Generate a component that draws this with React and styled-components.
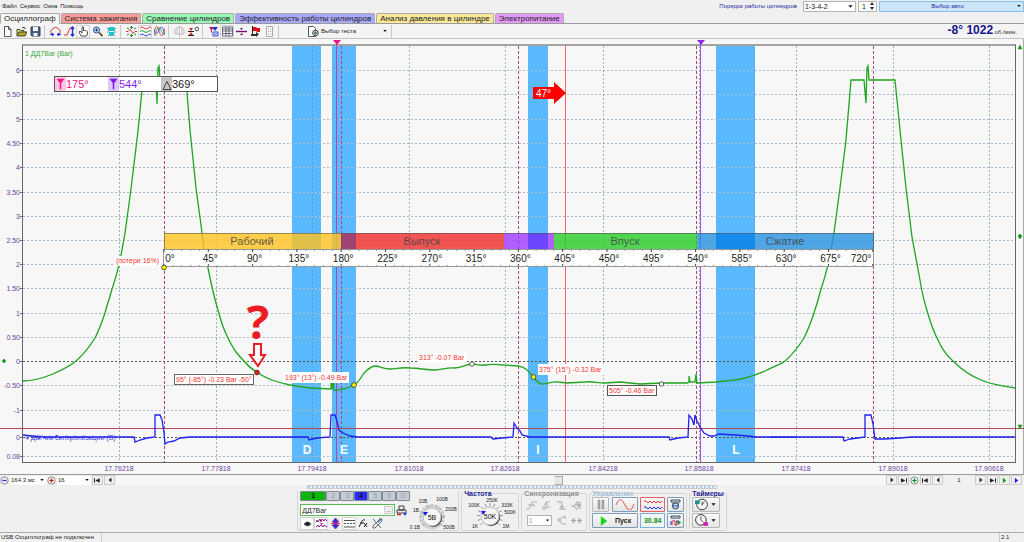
import React, { useState } from "react";
import styled, { createGlobalStyle } from "styled-components";

const MENU = ["Файл", "Сервис", "Окна", "Помощь"];

const TABS = [
  { title: "Осциллограф", color: "#f6f6f6" },
  { title: "Система зажигания", color: "#fb9c98" },
  { title: "Сравнение цилиндров", color: "#98f8b4" },
  { title: "Эффективность работы цилиндров", color: "#a9a8fb" },
  { title: "Анализ давления в цилиндре", color: "#fbe898" },
  { title: "Электропитание", color: "#e29bf8" },
];

const Y_MARKS = [
  [70, "6"], [94, "5.50"], [119, "5"], [143, "4.50"], [167, "4"], [192, "3.50"],
  [216, "3"], [240, "2.50"], [264, "2"], [288, "1.50"], [313, "1"], [337, "0.50"],
  [361, "0"], [385, "-0.50"], [410, "-1"], [437, "0"], [456, "0.08"],
];

const X_MARKS = [
  [119, "17.76218"], [216, "17.77818"], [312, "17.79418"], [409, "17.81018"],
  [505, "17.82618"], [603, "17.84218"], [699, "17.85818"], [796, "17.87418"],
  [893, "17.89018"], [989, "17.90618"],
];

const BANDS = [
  { x: 292, w: 29, label: "D", lx: 307 },
  { x: 332, w: 24, label: "E", lx: 344 },
  { x: 528, w: 20, label: "I", lx: 538 },
  { x: 716, w: 39, label: "L", lx: 736 },
];

const PHASES = [
  { x: 164, w: 177, color: "#ffc21e", label: "Рабочий", lx: 252 },
  { x: 341, w: 163, color: "#f02a2a", label: "Выпуск", lx: 422 },
  { x: 504, w: 50, color: "#9f38ff" },
  { x: 554, w: 143, color: "#26cc26", label: "Впуск", lx: 625 },
  { x: 697, w: 177, color: "#2690e0", label: "Сжатие", lx: 785 },
];

const TDC = [164, 341, 518, 696, 873];

const PRESSURE =
  "M23 381C33 381 43 378 53 374C62 370 70 366 76 361C84 354 90 346 95 338C99 330 102 322 105 313" +
  "C107 305 110 297 112 289C115 281 117 272 119 265C121 256 123 244 125 233L131 189L138 131L143 80H156L157 104L158 68L159 66L160 80" +
  "H186L190 130L196 188L201 225L204 249L208 268C210 278 214 297 218 310C221 322 224 330 228 338" +
  "C231 344 233 348 236 352C239 356 241 358 244 361C248 366 253 370 257 372C262 376 267 378 272 380" +
  "C280 383 285 384 290 385L310 388L331 389V379L332 389L333 378L334 390C341 391 348 388 354 385" +
  "C358 383 361 378 364 373C368 369 371 366 375 366C380 366 383 369 390 369C397 369 400 367 410 368" +
  "C420 368 425 370 435 370C442 370 447 367 455 368C462 368 466 364 472 364C477 364 480 366 485 365" +
  "S495 364 503 365L518 366C526 367 529 372 533 377C537 382 539 384 542 384C548 384 552 381 558 382" +
  "L567 383L585 382C592 381 597 383 605 383L620 382L640 384L661 383L687 383L689 382L689 376L690 382L695 382L696 374L697 383" +
  "L716 382L735 380C750 378 758 374 765 371C774 366 780 365 785 361C793 354 799 346 804 338" +
  "C808 330 811 322 814 313C817 304 819 297 821 289C824 281 826 272 828 265C830 256 832 244 834 233L840 188L846 140L851 80" +
  "H864L866 103L867 68L868 66L869 80H895L901 140L906 188L912 237L920 280C923 300 931 326 937 338" +
  "C941 347 947 356 953 361C962 370 971 376 981 380C992 385 1005 386 1015 388";

const SYNC =
  "M23 435L32 436L48 437H134L135 442L140 440L147 438L155 437V415H160L162 420L164 432L165 444L168 442L174 441" +
  "L180 438L190 437H308L309 440L317 438L330 437L331 415H335L337 421L339 430L343 433L350 436L358 437H491L493 439" +
  "L502 438L513 437L514 423L517 428L520 431L522 435L530 437H669L670 440L678 438L688 437L689 415L692 419L694 425" +
  "L695 415L697 421L700 427L704 433L710 436L714 436L719 434L735 435L748 436L756 437H843L844 441L850 439L858 438L865 437" +
  "V415H871L873 424L875 439H884L900 438L912 437H1015";

const NOISE = "M30 436l3 2 3-2 3 3 3-3 4 2 4-2 3 2 4-3 3 3 4-1 3-1 4 2 4-2 4 2 5-2 5 2 5-2M770 438l2-2 2 2 2-2 2 2 2-2 2 2 2-2 2 2 2-2 2 2 2-2 2 2 2-2";

function Chart() {
  return (
    <ChartSvg viewBox="0 39 1024 435" role="img" aria-label="Осциллограмма">
      <rect x="0" y="39" width="1024" height="435" fill="#f7f7f7" />
      {BANDS.map((b) => (
        <rect key={b.label} x={b.x} y="45" width={b.w} height="417" fill="#5ab8ff" />
      ))}
      <g shapeRendering="crispEdges" fill="none">
        {Y_MARKS.map(([y]) => (
          <React.Fragment key={y}>
            <path d={`M23 ${y}.5H1015`} stroke={y === 361 || y === 437 ? "#555" : "#a9bcc8"} strokeDasharray="2 2" />
            <path d={`M20 ${y}.5H23`} stroke="#666" />
          </React.Fragment>
        ))}
        {X_MARKS.map(([x]) => (
          <path key={x} d={`M${x}.5 46V462`} stroke="#6f8ea0" strokeOpacity="0.65" strokeDasharray="2 2" />
        ))}
        {TDC.map((x) => (
          <path key={x} d={`M${x}.5 46V462`} stroke="#b0447c" strokeDasharray="3 2" />
        ))}
        <path d="M22 45H1016" stroke="#a2a2a2" strokeWidth="2" />
        <path d="M22.5 45V462.5H1015.5V45" stroke="#666" />
        <path d="M1023.5 39V474" stroke="#aaa" />
        <path d="M565.5 46V462" stroke="#ff6464" />
        <path d="M336.5 41V462" stroke="#c23cb4" />
        <path d="M700.5 41V462" stroke="#a24dff" />
        <path d="M0 428.5H1024" stroke="#b04a58" />
      </g>
      <path d={PRESSURE} fill="none" stroke="#1fa51f" strokeWidth="1.3" />
      <path d={NOISE} fill="none" stroke="#2424f0" strokeWidth="0.8" />
      <path d={SYNC} fill="none" stroke="#2020f0" strokeWidth="1.3" />

      <path d="M333 40h8l-4 5z" fill="#f0148c" />
      <path d="M697 40h8l-4 5z" fill="#8a2be2" />
      <path d="M4 359l2 2-2 2-2-2zM1020 234l2 2-2 3-2-3zM1018 49h4l-2-4zM1018 425h4l-2 4z" fill="#12980f" stroke="#12980f" strokeWidth="0.5" />

      {Y_MARKS.map(([y, t]) => (
        <AxisText key={y} x="20" y={y + 3} textAnchor="end">{t}</AxisText>
      ))}
      {X_MARKS.map(([x, t]) => (
        <AxisText key={x} x={x} y="471" textAnchor="middle">{t}</AxisText>
      ))}
      <ChannelText x="25" y="56" $color="#3da53d">1 ДД7Bar (Bar)</ChannelText>
      <ChannelText x="25" y="440" $color="#4848e8">4 Датчик синхронизации (В)</ChannelText>
      {BANDS.map((b) => (
        <BandText key={b.label} x={b.lx} y="454">{b.label}</BandText>
      ))}

      {/* engine phases and the degree ruler */}
      {PHASES.map((p) => (
        <rect key={p.x} x={p.x} y="233" width={p.w} height="16" fill={p.color} fillOpacity="0.8" />
      ))}
      <rect x="341" y="233" width="15" height="16" fill="#5040a0" fillOpacity="0.4" />
      <rect x="528" y="233" width="20" height="16" fill="#5040ff" fillOpacity="0.6" />
      <rect x="716" y="233" width="39" height="16" fill="#0a88f0" fillOpacity="0.7" />
      <rect x="164.5" y="233.5" width="709" height="16" fill="none" stroke="#555" strokeOpacity="0.6" />
      {PHASES.filter((p) => p.label).map((p) => (
        <PhaseText key={p.label} x={p.lx} y="245">{p.label}</PhaseText>
      ))}
      <rect x="163.5" y="249.5" width="710" height="17" fill="#fff" stroke="#999" />
      {Array.from({ length: 81 }, (_, i) => (
        <path
          key={i}
          d={`M${164 + i * 8.86} 249v${i % 5 ? 2 : 3}m0 ${i % 5 ? 15 : 14}v-${i % 5 ? 1 : 2}`}
          stroke={i % 5 ? "#999" : "#444"}
        />
      ))}
      {Array.from({ length: 17 }, (_, i) => (
        <DegreeText key={i} x={i === 0 ? 170 : i === 16 ? 861 : 166 + i * 44.3} y="262">{`${i * 45}°`}</DegreeText>
      ))}

      {/* cursor readout */}
      <rect x="54.5" y="76.5" width="163" height="15" fill="#fff" stroke="#555" />
      <rect x="55" y="77" width="11" height="14" fill="#fcc6e2" />
      <rect x="108" y="77" width="11" height="14" fill="#dcc8fa" />
      <rect x="161" y="77" width="11" height="14" fill="#c6c6c6" />
      <path d="M57 79h7l-3 4v6h-1v-6z" fill="#f0148c" stroke="#f0148c" strokeWidth="0.5" />
      <path d="M110 79h7l-3 4v6h-1v-6z" fill="#7f14f0" stroke="#7f14f0" strokeWidth="0.5" />
      <path d="M163 89.5l4-8 4 8z" fill="none" stroke="#444" />
      <ReadoutText x="66" y="88" $color="#f0148c">175°</ReadoutText>
      <ReadoutText x="119" y="88" $color="#7f24f0">544°</ReadoutText>
      <ReadoutText x="172" y="88" $color="#222">369°</ReadoutText>

      <path d="M533 87h21v-5l12 11-12 11v-5h-21z" fill="#fe0000" />
      <ArrowText x="536" y="97">47°</ArrowText>

      {/* point labels */}
      <rect x="115" y="256" width="46" height="10" fill="#fff" />
      <PointText x="116" y="263">(потери 16%)</PointText>
      <rect x="174.5" y="374.5" width="79" height="10" fill="#fff" stroke="#666" />
      <PointText x="176" y="382">95° (-85°) -0.23 Bar -50°</PointText>
      <rect x="283" y="372" width="66" height="11" fill="#fff" />
      <PointText x="285" y="380">193° (13°) -0.49 Bar</PointText>
      <rect x="417" y="352" width="50" height="11" fill="#fff" />
      <PointText x="419" y="360">313° -0.07 Bar</PointText>
      <rect x="538" y="364" width="66" height="11" fill="#fff" />
      <PointText x="539" y="372">375° (15°) -0.32 Bar</PointText>
      <rect x="607.5" y="385.5" width="49" height="10" fill="#fff" stroke="#555" />
      <PointText x="609" y="393">505° -0.46 Bar</PointText>
      <g stroke="#333" strokeWidth="0.8">
        <circle cx="164" cy="267.5" r="2.4" fill="#fff200" />
        <circle cx="257" cy="372.5" r="2.4" fill="#f01414" />
        <circle cx="354" cy="385" r="2.4" fill="#fff200" />
        <circle cx="533.5" cy="377" r="2.4" fill="#fff200" />
        <circle cx="472" cy="364" r="2.2" fill="#fff" />
        <circle cx="661.5" cy="384" r="2.2" fill="#fff" />
      </g>
      <QuestionText x="258" y="339">?</QuestionText>
      <path d="M254 344h7v11h4l-7 11-8-11h4z" fill="#fff" stroke="#ed1c24" strokeWidth="2" />
    </ChartSvg>
  );
}

const GLYPHS = {
  new: <path d="M2.5.5h4l2.5 3v7h-6.5zM6.5.5v3h2.5" fill="#fff" stroke="#444" strokeWidth="0.9" />,
  open: (
    <>
      <path d="M1 9.5v-6h3l1 1h3v2M6 2q2-2 4 1" fill="#e8dc60" stroke="#333" strokeWidth="0.9" />
      <path d="M1 10l2-4h8l-2 4z" fill="#b8a820" stroke="#333" strokeWidth="0.9" />
    </>
  ),
  save: (
    <>
      <path d="M1 1h9v9H2L1 9z" fill="#4a5f8c" stroke="#333" strokeWidth="0.9" />
      <path d="M3 1h5v4H3zM3.5 7h4v3h-4z" fill="#f4f4f4" />
    </>
  ),
  loop: (
    <>
      <path d="M2 8Q-1 5 3 2.5Q5.5 0 8 2.5Q12 5 9 8" fill="none" stroke="#e83030" />
      <path d="M0 8.5h4M7 8.5h4M2 7l2 1.5L2 10M9 7L7 8.5 9 10" fill="none" stroke="#2030e0" />
    </>
  ),
  slope: (
    <>
      <path d="M0 9h3L6 2h4" fill="none" stroke="#e83030" />
      <path d="M8.5 1v9M7 3l1.5-2L10 3M7 8l1.5 2L10 8" fill="none" stroke="#2030e0" strokeWidth="1.3" />
    </>
  ),
  hand: <path d="M3 10L1 6l1-1 2 2V1h1.5v4l1-1 1 1 1-.5 1 1V8l-1 2z" fill="#fff" stroke="#222" strokeWidth="0.8" />,
  zoom: (
    <>
      <circle cx="4.5" cy="4" r="3" fill="#bce0ff" stroke="#2050b0" />
      <path d="M7 6.5L10.5 10" stroke="#705030" strokeWidth="1.8" />
      <path d="M3 4h3M4.5 2.5v3" stroke="#333" />
    </>
  ),
  phase: (
    <>
      <path d="M3 1h5l1 4H2zM3 6h5v2H3zM4 8h3v2H4z" fill="#12c8d0" />
      <path d="M1 2l2 1M10 2L8 3M1 6h2M10 6H8M2 10l2-2M9 10L7 8" stroke="#207880" strokeWidth="0.8" />
    </>
  ),
  spread: (
    <>
      <path d="M0 5.5h2l2-2 3 4 2-2h2" fill="none" stroke="#d03030" />
      <path d="M5.5 0v3M5.5 8v3M4 1.5h3M4 9.5h3M1 2l2 1M10 2L8 3M1 9l2-1M10 9L8 8" fill="none" stroke="#208838" />
    </>
  ),
  waves: (
    <>
      <path d="M0 2q2-2 4 0t4 0 3 0" fill="none" stroke="#e03838" />
      <path d="M0 5.5q2-2 4 0t4 0 3 0" fill="none" stroke="#209838" />
      <path d="M0 9q2-2 4 0t4 0 3 0" fill="none" stroke="#3040e0" />
    </>
  ),
  overlay: (
    <>
      <path d="M0 9Q2-6 5 5T11 2" fill="none" stroke="#e03838" strokeWidth="0.8" />
      <path d="M0 3Q2 12 5 4T11 9" fill="none" stroke="#3040e0" strokeWidth="0.8" />
      <path d="M1 10Q4-3 7 4T11 7" fill="none" stroke="#28a040" strokeWidth="0.8" />
    </>
  ),
  lens: <path d="M1 8Q0 1 5.5 1T10 8zM5.5 0v11M3 2v6M8 2v6" fill="none" stroke="#b4b4b4" strokeWidth="0.8" />,
  level: (
    <>
      <path d="M0 5.5h6M0 9.5h6" stroke="#222" />
      <path d="M1 2h4L3 5zM1 9l2-3 2 3z" fill="#d02828" />
      <circle cx="9" cy="3" r="1.8" fill="none" stroke="#444" strokeWidth="0.9" />
    </>
  ),
  filter: (
    <>
      <path d="M1 1h5L4 4v3L3 6V4z" fill="#d01850" />
      <path d="M4 1h6L7 5z" fill="#2030d8" />
      <path d="M5 6h5v4H5zM6 8h3" fill="#fff" stroke="#2030d8" strokeWidth="0.9" />
    </>
  ),
  table: <path d="M.5 1h10v9H.5zM.5 3h10M.5 5h10M.5 7.5h10M4 1v9M7 1v9" fill="#fff" stroke="#444b60" strokeWidth="0.8" />,
  divide: (
    <>
      <path d="M0 5.5h11" stroke="#70106c" strokeWidth="1.4" />
      <path d="M4 2h3L5.5 4zM4 9h3L5.5 7z" fill="#70106c" />
    </>
  ),
  flag: (
    <>
      <path d="M2.5 0v10" stroke="#222" />
      <path d="M3 1h3l1 1h3v4H7L6 5H3z" fill="#e01010" />
      <path d="M1 8h5v2H1zM6 6l3 2-3 3z" fill="#333" />
    </>
  ),
  script: <path d="M2.5.5h6v10h-6zM4 3h1M6 3h1M4 5.5h1M6 5.5h1M4 8h1M6 8h1" fill="#fafafa" stroke="#aaa" />,
  test: (
    <>
      <path d="M.5.5h5l2 2v8h-7z" fill="#fff" stroke="#444" strokeWidth="0.9" />
      <circle cx="7.5" cy="7" r="2.8" fill="#c8d8c8" stroke="#444" />
      <path d="M6 7h3M7.5 5.5v3" stroke="#2b6a36" />
    </>
  ),
  minus: (
    <>
      <circle cx="5.5" cy="5.5" r="4.5" fill="#eaeafa" stroke="#666" strokeWidth="0.8" />
      <path d="M3 5.5h5" stroke="#2030c0" strokeWidth="1.5" />
    </>
  ),
  plus: (
    <>
      <circle cx="5.5" cy="5.5" r="4.5" fill="#faeaea" stroke="#666" strokeWidth="0.8" />
      <path d="M3 5.5h5M5.5 3v5" stroke="#c01818" strokeWidth="1.5" />
    </>
  ),
  plusGreen: (
    <>
      <circle cx="5.5" cy="5.5" r="4.5" fill="#e0f4e0" stroke="#666" strokeWidth="0.8" />
      <path d="M3 5.5h5M5.5 3v5" stroke="#168028" strokeWidth="1.5" />
    </>
  ),
  first: <path d="M0 2h1.5v7H0zM9 2v7L2 5.5z" fill="currentColor" />,
  prev: <path d="M7.5 2v7l-4-3.5z" fill="currentColor" />,
  next: <path d="M3.5 2v7l4-3.5z" fill="currentColor" />,
  last: <path d="M1.5 2v7l7-3.5zM9.5 2H11v7H9.5z" fill="currentColor" />,
  play: <path d="M2 0v11l7-5.5z" fill="#10d820" />,
  caret: <path d="M3 4h5L5.5 7z" fill="#111" />,
  printer: (
    <>
      <path d="M3 1h5v4H3zM1 5h9v3H1z" fill="#e8e8e8" stroke="#333" strokeWidth="0.9" />
      <path d="M1 9.5h4" stroke="#e02020" strokeWidth="1.5" />
      <path d="M7 8h4l-2 3z" fill="#2040e0" />
    </>
  ),
  eye: (
    <>
      <path d="M2 6q3.5-4 7 0-3.5 4-7 0z" fill="#444" stroke="#333" strokeWidth="0.7" />
      <circle cx="5.5" cy="5.5" r="1.3" fill="#111" />
    </>
  ),
  jitter: (
    <>
      <path d="M0 4l1-2 1 2 2-3 1 3 1-3 2 2 1-2 2 2M0 9l2-2 1 2 2-2 2 2 1-2 3 2" fill="none" stroke="#8c2090" />
      <path d="M4 5h3L5.5 7z" fill="#8c2090" />
    </>
  ),
  updown: (
    <>
      <path d="M5.5 0L9 4H7v3h2l-3.5 4L2 7h2V4H2z" fill="#3030e8" stroke="#901890" strokeWidth="0.7" />
      <path d="M1 5.5h9" stroke="#e02050" />
    </>
  ),
  lines: <path d="M0 2.5h11M0 5.5h2M3 5.5h2M6 5.5h2M9 5.5h2M0 9h11" stroke="#555" />,
  formula: <path d="M1 9l3-6q1-2 3-1M2 5h4M6 5l3 4M9 5L6 9" fill="none" stroke="#222" />,
  tools: (
    <>
      <path d="M1 1l8 9M7 1h3v2L3 10H1V8l7-7" fill="none" stroke="#666" />
      <path d="M6 4l3-3" stroke="#3070c0" strokeWidth="1.5" />
    </>
  ),
  trigRise: <path d="M0 9h3Q4 9 5 5T7 2h4M2 5h6M8 4v3" fill="none" stroke="#b2b2b2" />,
  trigStep: <path d="M1 9h4V2h4M3 5l2-2 2 2M1 7h8" fill="none" stroke="#b2b2b2" />,
  trigFall: <path d="M1 2h5v7h4M4 6l2 2 2-2M3 9h3" fill="none" stroke="#a8a8a8" />,
  trigBoth: <path d="M0 6h3l3-4M3 6l3 4M7 1v8M9 2v7M5 5h5" fill="none" stroke="#a2a2a2" />,
  trigMulti: <path d="M1 5h3l2-3h4M4 5l2 4h4M8 1l2 1-2 2M3 3v4" fill="none" stroke="#b2b2b2" />,
  trigGate: <path d="M0 5.5h5M6 5.5h5M3 3v5M8 3v5M1 4l2 2-2 2M10 4L8 6l2 2" fill="none" stroke="#a2a2a2" />,
  pause: <path d="M3 1h2v9H3zM7 1h2v9H7z" fill="#aaa" stroke="#888" strokeWidth="0.5" />,
  cylinder: (
    <>
      <path d="M1 1h9v2H1zM2 5h7" fill="none" stroke="#345" />
      <circle cx="5.5" cy="7" r="3" fill="#c8d8f0" stroke="#345" />
      <path d="M2 7h7" stroke="#2050c0" />
    </>
  ),
  cycle: (
    <>
      <path d="M1 1h9v2H1z" fill="none" stroke="#345" />
      <path d="M2 10V7q1-3 3-1v4h2V6" fill="none" stroke="#d02040" />
      <path d="M1 6v4M7 5v3" stroke="#3040d0" />
      <path d="M8 5l3 2.5L8 10z" fill="#10a020" />
    </>
  ),
  timerStart: (
    <>
      <circle cx="6" cy="5.5" r="4.5" fill="#f4f4f4" stroke="#333" strokeWidth="0.8" />
      <path d="M6 6l2-3M6 3v3" stroke="#555" fill="none" strokeWidth="0.8" />
      <path d="M0 2h4v3H0z" fill="#20908c" />
    </>
  ),
  timerStop: (
    <>
      <circle cx="5" cy="5" r="4.5" fill="#f4f4f4" stroke="#333" strokeWidth="0.8" />
      <path d="M5 2v3l2 2" stroke="#555" fill="none" strokeWidth="0.8" />
      <path d="M7 7h4v3H7z" fill="#d018b0" />
    </>
  ),
};

function Glyph({ name, size = 11 }) {
  return (
    <GlyphSvg viewBox="0 0 11 11" $size={size} aria-hidden="true">
      {GLYPHS[name]}
    </GlyphSvg>
  );
}

const TOOL_GROUPS = [
  ["new", "open", "save"],
  ["loop", "slope", "hand", "zoom", "phase"],
  ["spread", "waves", "overlay"],
  ["lens", "level"],
  ["filter", "table", "divide", "flag", "script"],
];
const PRESSED = ["hand", "waves", "table"];

function Knob({ label, value, marks, ring }) {
  return (
    <KnobSvg viewBox="1 3 52 32" role="img" aria-label={`${label} ${value}`}>
      {Array.from({ length: 13 }, (_, i) => {
        const a = ((i * 22 - 222) * Math.PI) / 180;
        const c = Math.cos(a);
        const s = Math.sin(a);
        return <path key={i} d={`M${27 + 10 * c} ${22 + 10 * s}L${27 + 13 * c} ${22 + 13 * s}`} stroke="#777" strokeWidth="0.8" />;
      })}
      {ring && <circle cx="27" cy="22" r="11" fill="none" stroke="#c4c4c4" strokeWidth="3" strokeDasharray="2 1" />}
      <circle cx="28" cy="23" r="9" fill="#333" />
      <circle cx="27" cy="22" r="9" fill="#f6f6f6" stroke="#bbb" />
      <path d="M18 17l5 0-3 4z" fill="#1818f0" />
      <KnobValue x="27" y="25">{value}</KnobValue>
      {marks.map(([x, y, t]) => (
        <KnobMark key={t} x={x} y={y}>{t}</KnobMark>
      ))}
    </KnobSvg>
  );
}

export default function App() {
  const [tab, setTab] = useState(0);
  const [name, setName] = useState("ДД7Bar");

  return (
    <Window>
      <GlobalStyle />
      <MenuBar>
        <Menu>
          {MENU.map((m) => (
            <MenuItem key={m} type="button">{m}</MenuItem>
          ))}
        </Menu>
        <Engine>
          <EngineLabel htmlFor="order">Порядок работы цилиндров</EngineLabel>
          <SelectBox $width={53}>
            <select id="order" defaultValue="1-3-4-2">
              <option>1-3-4-2</option>
            </select>
            <Glyph name="caret" size={9} />
          </SelectBox>
          <Spinner>
            <input aria-label="Номер цилиндра" defaultValue="1" />
            <svg viewBox="0 0 6 10" width="6" height="10" aria-hidden="true">
              <path d="M1 4l2-3 2 3zM1 6l2 3 2-3z" fill="#222" />
            </svg>
          </Spinner>
          <CarButton type="button">
            <span>Выбор авто</span>
            <Glyph name="caret" size={8} />
          </CarButton>
        </Engine>
      </MenuBar>

      <TabBar role="tablist">
        {TABS.map((t, i) => (
          <Tab key={t.title} type="button" role="tab" aria-selected={tab === i} $color={t.color} onClick={() => setTab(i)}>
            {t.title}
          </Tab>
        ))}
      </TabBar>

      <Toolbar>
        {TOOL_GROUPS.map((group, i) => (
          <ToolGroup key={i}>
            {group.map((g) => (
              <ToolButton key={g} type="button" aria-label={g} $pressed={PRESSED.includes(g)}>
                <Glyph name={g} />
              </ToolButton>
            ))}
          </ToolGroup>
        ))}
        <TestButton type="button">
          <Glyph name="test" />
          <span>Выбор теста</span>
          <Glyph name="caret" size={8} />
        </TestButton>
        <Rpm>
          -8° 1022 <small>об./мин.</small>
        </Rpm>
      </Toolbar>

      <Chart />

      <ScrollRow>
        <Glyph name="minus" size={9} />
        <SelectBox $width={36} $flat>
          <select aria-label="Развёртка">
            <option>164.3 мс</option>
          </select>
          <Glyph name="caret" size={8} />
        </SelectBox>
        <Glyph name="plus" size={9} />
        <SelectBox $width={34} $flat>
          <select aria-label="Масштаб">
            <option>16</option>
          </select>
          <Glyph name="caret" size={8} />
        </SelectBox>
        <NavButton type="button" aria-label="В начало"><Glyph name="first" size={7} /></NavButton>
        <NavButton type="button" aria-label="Назад"><Glyph name="prev" size={8} /></NavButton>
        <Track><Thumb /></Track>
        <NavButton type="button" aria-label="Вперёд"><Glyph name="next" size={8} /></NavButton>
        <NavButton type="button" aria-label="В конец"><Glyph name="last" size={7} /></NavButton>
        <Glyph name="plusGreen" size={9} />
        <NavButton type="button" aria-label="Первый кадр"><Glyph name="first" size={7} /></NavButton>
        <NavButton type="button" aria-label="Предыдущий кадр"><Glyph name="prev" size={8} /></NavButton>
        <Frame>1</Frame>
        <NavButton type="button" aria-label="Следующий кадр"><Glyph name="next" size={8} /></NavButton>
        <NavButton type="button" aria-label="Последний кадр"><Glyph name="last" size={7} /></NavButton>
        <NavButton type="button" aria-label="Воспроизвести" $color="#0a9a0a"><Glyph name="next" size={9} /></NavButton>
        <NavButton type="button" aria-label="Следить" $color="#1414f0"><Glyph name="next" size={9} /></NavButton>
      </ScrollRow>

      <Splitter />

      <Deck>
        <Channel>
          <ChannelSide>
            <ChannelTabs>
              {["1", "2", "3", "4", "5", "6", "D"].map((c) => (
                <ChannelButton key={c} type="button" $on={c === "1" ? "#0cb40c" : c === "4" ? "#2a2af4" : null} $wide={c === "1"}>
                  {c}
                </ChannelButton>
              ))}
            </ChannelTabs>
            <NameRow>
              <NameBox>
                <input aria-label="Датчик" value={name} onChange={(e) => setName(e.target.value)} />
                <button type="button">...</button>
              </NameBox>
              <Glyph name="printer" />
            </NameRow>
            <IconRow>
              {["eye", "jitter", "updown", "lines", "formula", "tools"].map((g, i) => (
                <ToolButton key={g} type="button" aria-label={g} $pressed={i < 2 || i === 3}>
                  <Glyph name={g} />
                </ToolButton>
              ))}
            </IconRow>
          </ChannelSide>
          <Knob
            label="Диапазон"
            value="5В"
            ring
            marks={[[18, 8, "10В"], [37, 6, "100В"], [11, 17, "1В"], [46, 16, "200В"], [10, 34, "0.1В"], [44, 34, "500В"]]}
          />
        </Channel>

        <Group>
          <legend>Частота</legend>
          <Knob
            label="Частота"
            value="50K"
            marks={[[11, 13, "100K"], [29, 8, "250K"], [44, 13, "333K"], [47, 20, "500K"], [12, 34, "1K"], [43, 34, "1M"]]}
          />
        </Group>

        <Group $color="#8a8a8a">
          <legend>Синхронизация</legend>
          <SyncGrid>
            <Glyph name="trigRise" />
            <Glyph name="trigStep" />
            <Glyph name="trigFall" />
            <Glyph name="trigBoth" />
            <SyncSelect>
              <SelectBox $width={25}>
                <select aria-label="Канал синхронизации" disabled>
                  <option>1</option>
                </select>
                <Glyph name="caret" size={7} />
              </SelectBox>
            </SyncSelect>
            <Glyph name="trigMulti" />
            <Glyph name="trigGate" />
          </SyncGrid>
        </Group>

        <Group $color="#9cb8d4">
          <legend>Управление</legend>
          <ControlGrid>
            <ControlPair>
              <Control type="button" aria-label="Пауза" $disabled><Glyph name="pause" /></Control>
              <Control type="button" aria-label="Синус" $wide>
                <svg viewBox="0 0 20 11" width="20" height="11"><path d="M1 6Q5-5 10 6T19 5" fill="none" stroke="#e85050" /></svg>
              </Control>
            </ControlPair>
            <Control type="button" aria-label="Сигналы" $border="#e86060">
              <svg viewBox="0 0 20 11" width="20" height="11">
                <path d="M1 2h2l2 2 2-2 2 2 2-2 2 2 2-2 2 2 2-2" fill="none" stroke="#e83030" />
                <path d="M1 8h2l2 2 2-2 2 2 2-2 2 2 2-2 2 2 2-2" fill="none" stroke="#3030e8" />
              </svg>
            </Control>
            <Control type="button" aria-label="Цилиндры"><Glyph name="cylinder" /></Control>
            <Control type="button">
              <Glyph name="play" size={10} />
              <b>Пуск</b>
            </Control>
            <Timer>30.84</Timer>
            <Control type="button" aria-label="Цикл"><Glyph name="cycle" /></Control>
          </ControlGrid>
        </Group>

        <Group>
          <legend>Таймеры</legend>
          <TimerList>
            <Control type="button" aria-label="Таймер запуска" $plain>
              <Glyph name="timerStart" size={13} />
              <Glyph name="caret" size={9} />
            </Control>
            <Control type="button" aria-label="Таймер остановки" $plain>
              <Glyph name="timerStop" size={13} />
              <Glyph name="caret" size={9} />
            </Control>
          </TimerList>
        </Group>
      </Deck>

      <StatusBar>
        <span>USB Осциллограф не подключен</span>
        <span>2.1</span>
      </StatusBar>
    </Window>
  );
}

const GlobalStyle = createGlobalStyle`
  * {
    box-sizing: border-box;
  }
  body {
    margin: 0;
    background: #f0f0f0;
    font-family: "Liberation Sans", Arial, sans-serif;
    font-size: 6px;
    color: #222;
  }
  button, input, select {
    font: inherit;
    color: inherit;
    margin: 0;
    padding: 0;
  }
`;

const Window = styled.div`
  display: flex;
  flex-direction: column;
  min-height: 100vh;
`;

const MenuBar = styled.header`
  display: flex;
  justify-content: space-between;
  height: 13px;
`;

const Menu = styled.nav`
  display: flex;
  align-items: center;
  gap: 3px;
  padding-left: 2px;
  height: 12px;
`;

const MenuItem = styled.button`
  border: 0;
  background: none;
`;

const Engine = styled.div`
  display: flex;
  align-items: center;
  gap: 2px;
  height: 12px;
`;

const EngineLabel = styled.label`
  color: #28289c;
  margin-right: 4px;
`;

const SelectBox = styled.div`
  display: flex;
  align-items: center;
  width: ${(p) => p.$width}px;
  height: ${(p) => (p.$flat ? 9 : 11)}px;
  background: #fff;
  border: ${(p) => (p.$flat ? "0" : "1px solid #b4b4b4")};
  font-size: ${(p) => (p.$flat ? 6 : 7)}px;

  select {
    appearance: none;
    flex: 1;
    min-width: 0;
    border: 0;
    background: none;
    padding-left: 1px;
  }
`;

const Spinner = styled.div`
  display: flex;
  align-items: center;
  width: 19px;
  height: 11px;
  border: 1px solid #b4b4b4;
  background: #fff;
  font-size: 7px;

  input {
    width: 10px;
    border: 0;
    background: none;
    padding-left: 3px;
  }
`;

const CarButton = styled.button`
  display: flex;
  align-items: center;
  width: 145px;
  height: 11px;
  background: #cbe6fb;
  border: 1px solid #84c0ea;
  color: #28289c;

  span {
    flex: 1;
  }
`;

const TabBar = styled.div`
  display: flex;
  gap: 1px;
  height: 11px;
  border-bottom: 1px solid #999;
`;

const Tab = styled.button`
  height: 11px;
  padding: 0 3px;
  font-size: 8px;
  line-height: 10px;
  white-space: nowrap;
  background: ${(p) => p.$color};
  border: 1px solid #aaa;
  border-bottom: ${(p) => (p["aria-selected"] ? `1px solid ${p.$color}` : "1px solid #999")};
  border-radius: 2px 2px 0 0;
`;

const Toolbar = styled.div`
  display: flex;
  align-items: center;
  height: 15px;
  background: #f4f4f4;
  border-bottom: 1px solid #c4c4c4;
`;

const ToolGroup = styled.div`
  display: flex;
  padding-right: 2px;
  margin-right: 3px;
  border-right: 1px solid #c8c8c8;
`;

const ToolButton = styled.button`
  display: flex;
  align-items: center;
  justify-content: center;
  width: 14px;
  height: 13px;
  border: 1px solid ${(p) => (p.$pressed ? "#d4d4d4" : "transparent")};
  background: ${(p) => (p.$pressed ? "#fbfbfb" : "none")};
`;

const GlyphSvg = styled.svg`
  flex: none;
  width: ${(p) => p.$size}px;
  height: ${(p) => p.$size}px;
`;

const TestButton = styled.button`
  display: flex;
  align-items: center;
  gap: 2px;
  width: 110px;
  height: 13px;
  padding: 0 2px 0 26px;
  border: 0;
  border-right: 1px solid #c8c8c8;
  background: none;

  span {
    flex: 1;
    text-align: left;
  }
`;

const Rpm = styled.output`
  margin-left: auto;
  padding-right: 7px;
  color: #14148c;
  font-size: 12px;
  font-weight: bold;
  line-height: 14px;

  small {
    margin-left: -2px;
    color: #333;
    font-size: 6px;
    font-weight: normal;
  }
`;

const ChartSvg = styled.svg`
  display: block;
  width: 100%;
  height: auto;
`;

const AxisText = styled.text`
  font-size: 7px;
  fill: #6a3f9e;
`;

const ChannelText = styled.text`
  font-size: 7px;
  fill: ${(p) => p.$color};
`;

const BandText = styled.text`
  font-size: 12px;
  font-weight: bold;
  fill: #fff;
  text-anchor: middle;
`;

const PhaseText = styled.text`
  font-size: 11px;
  fill: #444;
  fill-opacity: 0.85;
  text-anchor: middle;
`;

const DegreeText = styled.text`
  font-size: 10px;
  fill: #222;
  text-anchor: middle;
`;

const ReadoutText = styled.text`
  font-size: 11px;
  fill: ${(p) => p.$color};
`;

const ArrowText = styled.text`
  font-size: 10px;
  fill: #fff;
`;

const PointText = styled.text`
  font-size: 7px;
  fill: #f83030;
`;

const QuestionText = styled.text`
  font-family: "Open Sans", sans-serif;
  font-size: 47px;
  font-weight: bold;
  fill: #ed1c24;
  text-anchor: middle;
`;

const ScrollRow = styled.div`
  display: flex;
  align-items: center;
  gap: 1px;
  height: 11px;
  border-top: 1px solid #999;
  padding-right: 2px;
`;

const NavButton = styled.button`
  display: flex;
  align-items: center;
  justify-content: center;
  width: 11px;
  height: 10px;
  color: ${(p) => p.$color || "#222"};
  background: #f0f0f0;
  border: 1px solid #ccc;
`;

const Track = styled.div`
  flex: 1;
  height: 9px;
  background: #f7f7f7;
`;

const Thumb = styled.div`
  width: 9px;
  height: 9px;
  margin-left: 57%;
  background: #e6e6e6;
  border: 1px solid #aaa;
  border-left-color: #eee;
`;

const Frame = styled.span`
  width: 30px;
  text-align: center;
`;

const Splitter = styled.div`
  align-self: center;
  width: 40%;
  height: 4px;
  border: 1px solid #ccc;
  background: repeating-linear-gradient(90deg, #a8cdf0 0 2px, #f4f4f4 2px 4px);
`;

const Deck = styled.div`
  display: flex;
  justify-content: center;
  gap: 2px;
  padding: 1px 0;
`;

const Channel = styled.section`
  display: flex;
  width: 162px;
  padding-left: 2px;
  border: 1px solid #d4d4d4;
  border-top-color: transparent;
  border-radius: 2px;
`;

const ChannelSide = styled.div`
  display: flex;
  flex-direction: column;
  gap: 1px;
  width: 106px;
`;

const ChannelTabs = styled.div`
  display: flex;
`;

const ChannelButton = styled.button`
  flex: none;
  width: ${(p) => (p.$wide ? 26 : 14)}px;
  height: 10px;
  font-size: 7px;
  font-weight: ${(p) => (p.$on ? "bold" : "normal")};
  line-height: 8px;
  color: ${(p) => (p.$on ? "#111" : "#999")};
  background: ${(p) => p.$on || "#c6ccd4"};
  border: 1px solid #7a8c9c;
  border-radius: 1px;
`;

const NameRow = styled.div`
  display: flex;
  align-items: center;
  gap: 1px;
  padding-top: 2px;
`;

const NameBox = styled.div`
  display: flex;
  align-items: center;
  width: 95px;
  height: 12px;
  background: #fff;
  border: 1px solid #58bc58;

  input {
    flex: 1;
    min-width: 0;
    padding-left: 1px;
    border: 0;
    background: none;
    font-size: 7px;
  }

  button {
    width: 9px;
    height: 8px;
    margin-right: 1px;
    border: 1px solid #ccc;
    background: #eee;
    line-height: 4px;
  }
`;

const IconRow = styled.div`
  display: flex;
`;

const KnobSvg = styled.svg`
  display: block;
  flex: none;
  width: 52px;
  height: 32px;
  overflow: visible;

  ${Channel} & {
    margin-top: 7px;
  }
`;

const KnobValue = styled.text`
  font-size: 7px;
  fill: #111;
  text-anchor: middle;
`;

const KnobMark = styled.text`
  font-size: 5px;
  fill: #222;
  text-anchor: middle;
`;

const Group = styled.fieldset`
  min-width: 0;
  margin: 0;
  padding: 0 2px;
  border: 1px solid #d4d4d4;
  border-radius: 2px;

  legend {
    padding: 0;
    font-size: 7px;
    font-weight: bold;
    line-height: 7px;
    color: ${(p) => p.$color || "#1c1c90"};
  }
`;

const SyncGrid = styled.div`
  display: grid;
  grid-template-columns: repeat(4, 15px);
  align-items: center;
  justify-items: center;
  row-gap: 4px;
  padding-top: 3px;
`;

const SyncSelect = styled.div`
  grid-column: span 2;
  color: #777;
`;

const ControlGrid = styled.div`
  display: grid;
  grid-template-columns: 46px 25px 17px;
  gap: 1px 2px;
`;

const ControlPair = styled.div`
  display: flex;
  justify-content: space-between;
`;

const Control = styled.button`
  display: flex;
  align-items: center;
  justify-content: ${(p) => (p.$disabled || !p.$wide ? "space-evenly" : "center")};
  min-width: ${(p) => (p.$wide ? 26 : 17)}px;
  height: 15px;
  background: linear-gradient(#fafafa, #e4e4e4);
  border: 1px solid ${(p) => p.$border || (p.$plain || p.$disabled ? "#b8b8b8" : "#7c9cbc")};
  border-radius: 1px;

  b {
    font-size: 7px;
  }
`;

const Timer = styled.output`
  height: 15px;
  border: 1px solid #7cb0dc;
  background: #f0f6fa;
  color: #148c14;
  font-size: 7px;
  font-weight: bold;
  line-height: 13px;
  text-align: center;
`;

const TimerList = styled.div`
  display: grid;
  gap: 1px;
  width: 28px;
`;

const StatusBar = styled.footer`
  display: flex;
  flex: 1;
  align-items: center;
  border-top: 1px solid #aaa;

  span {
    padding-left: 1px;
    line-height: 9px;
    border-right: 1px solid #ccc;
  }

  span:first-child {
    width: 102px;
  }

  span:last-child {
    width: 25px;
    margin-left: auto;
    border-right: 0;
    border-left: 1px solid #ccc;
  }
`;
